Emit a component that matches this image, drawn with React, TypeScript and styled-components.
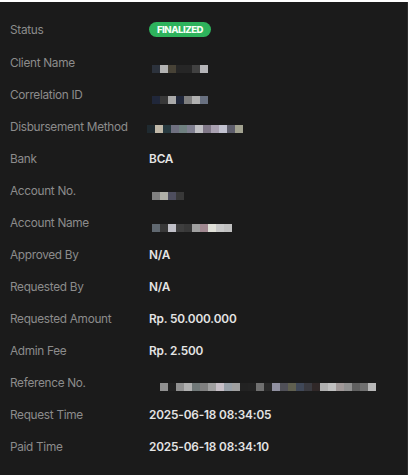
import React from "react";
import styled, { createGlobalStyle } from "styled-components";

const Global = createGlobalStyle`
  html, body { margin: 0; padding: 0; background: #ffffff; }
  body { font-family: Inter, "Noto Sans", Arial, sans-serif; }
`;

const Panel = styled.div`
  margin-top: 2px;
  width: 408px;
  height: 473px;
  background: #1b1b1b;
  border-right: 1px solid #2c2c2c;
  box-sizing: border-box;
  padding: 11px 0 0 10px;
  display: flex;
  flex-direction: column;
`;

const Row = styled.div<{ $h: number }>`
  display: grid;
  grid-template-columns: 139px 1fr;
  align-items: center;
  height: ${(p) => p.$h}px;
`;

const Label = styled.div`
  color: #8c8c8c;
  font-size: 11.8px;
  letter-spacing: -0.3px;
  white-space: nowrap;
`;

const Value = styled.div`
  color: #e4e4e4;
  font-size: 11.8px;
  font-weight: 600;
  letter-spacing: -0.15px;
  white-space: nowrap;
  display: flex;
  align-items: center;
`;

const Badge = styled.span`
  display: inline-flex;
  align-items: center;
  justify-content: center;
  height: 15px;
  width: 62px;
  border-radius: 8px;
  background: #2eb35c;
  color: #f4fff6;
  font-size: 9.6px;
  font-weight: 800;
  letter-spacing: -0.5px;
`;

const Mosaic = styled.div<{ $offset: number; $shift: number }>`
  display: flex;
  margin-top: ${(p) => p.$offset}px;
  margin-left: ${(p) => p.$shift}px;
`;

const Cell = styled.span<{ $c: string }>`
  width: 8px;
  height: 8px;
  background: ${(p) => p.$c};
`;

const Blur = ({ cells, offset = 10, shift = 3 }: { cells: string[]; offset?: number; shift?: number }) => (
  <Mosaic $offset={offset} $shift={shift}>
    {cells.map((c, i) => (
      <Cell key={i} $c={c} />
    ))}
  </Mosaic>
);

type Item = { label: string; value: React.ReactNode; h?: number };

const items: Item[] = [
  { label: "Status", value: <Badge>FINALIZED</Badge>, h: 33 },
  {
    label: "Client Name",
    h: 33,
    value: <Blur cells={["#2c323c", "#b2b2b2", "#474236", "#262626", "#262626", "#414141", "#b4b4b8"]} offset={12} />,
  },
  {
    label: "Correlation ID",
    value: <Blur cells={["#20273a", "#383838", "#a9a9a9", "#20273a", "#7f7f7f", "#b0b0b0", "#687080"]} offset={10} />,
  },
  {
    label: "Disbursement Method",
    value: (
      <Blur
        cells={["#1f2a30", "#c1b9a9", "#283a40", "#6f7080", "#6f8080", "#7f7f90", "#c0c0c4", "#807888", "#a9a1b1", "#c2c2d0", "#5e5e6c", "#a2a290"]}
        offset={4}
        shift={-2}
      />
    ),
  },
  { label: "Bank", value: "BCA" },
  { label: "Account No.", value: <Blur cells={["#808080", "#b0b0a8", "#4e4e5e", "#383838"]} offset={10} /> },
  {
    label: "Account Name",
    value: (
      <Blur
        cells={["#606870", "#383838", "#c0c0c8", "#3e3e3e", "#383838", "#a0a0a0", "#a08890", "#e0e0d8", "#c8c8c8", "#c0c0c0"]}
        offset={10}
      />
    ),
  },
  { label: "Approved By", value: "N/A" },
  { label: "Requested By", value: "N/A" },
  { label: "Requested Amount", value: "Rp. 50.000.000" },
  { label: "Admin Fee", value: "Rp. 2.500" },
  {
    label: "Reference No.",
    value: (
      <Blur
        cells={[
          "#909090", "#222222", "#909090", "#b0b0b0", "#707878", "#808080", "#a0a0a0", "#c8c0c8", "#98a0a8", "#a0a0a0",
          "#222222", "#232323", "#707070", "#2a2a2a", "#9090a0", "#505058", "#606050", "#404858", "#3a3a40", "#302828",
          "#b0b0b0", "#c0c0c0", "#a09898", "#909090", "#606060", "#707070", "#b8b8b8",
        ]}
        offset={8}
        shift={11}
      />
    ),
  },
  { label: "Request Time", value: "2025-06-18 08:34:05" },
  { label: "Paid Time", value: "2025-06-18 08:34:10" },
];

export default function App() {
  return (
    <>
      <Global />
      <Panel>
        {items.map((it) => (
          <Row key={it.label} $h={it.h ?? 32}>
            <Label>{it.label}</Label>
            <Value>{it.value}</Value>
          </Row>
        ))}
      </Panel>
    </>
  );
}
